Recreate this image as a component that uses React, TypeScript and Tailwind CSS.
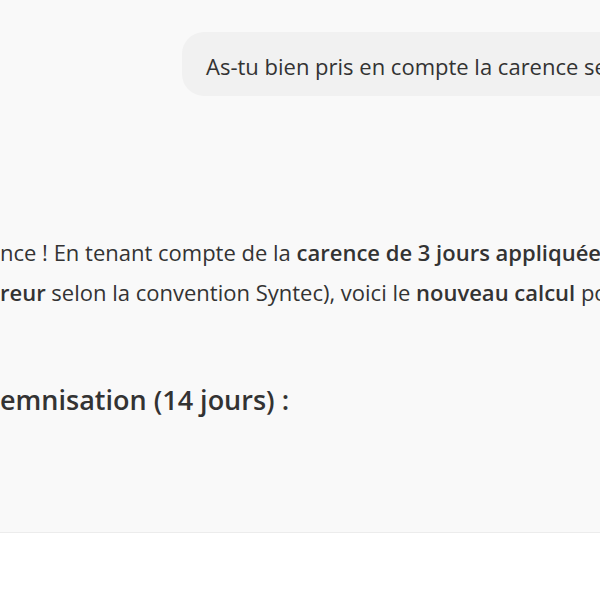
import React from 'react';

const font = "font-['Open_Sans','Noto_Sans',sans-serif]";

export default function App() {
  return (
    <div className={`w-[600px] h-[600px] overflow-hidden bg-white text-[#333333] ${font}`}>
      <div className="h-[533px] bg-[#f9f9f9] border-b border-[#ececec] overflow-hidden">
        {/* user message */}
        <div className="pt-8 pl-[182px]">
          <div className="h-16 w-[460px] rounded-[22px] bg-[#f1f1f1] pl-6 pt-1 flex items-center whitespace-nowrap text-[22px]">
            As-tu bien pris en compte la carence se
          </div>
        </div>

        {/* assistant answer */}
        <div className="mt-[136px] whitespace-nowrap text-[22px] leading-10">
          <div>
            nce ! En tenant compte de la <strong className="font-semibold">carence de 3 jours appliquée</strong>
          </div>
          <div>
            <strong className="font-semibold">reur</strong> selon la convention Syntec), voici le{' '}
            <strong className="font-semibold">nouveau calcul</strong> po
          </div>
        </div>

        <h3 className="mt-[70px] whitespace-nowrap text-[27px] font-semibold leading-9">
          emnisation (14 jours) :
        </h3>
      </div>
    </div>
  );
}
